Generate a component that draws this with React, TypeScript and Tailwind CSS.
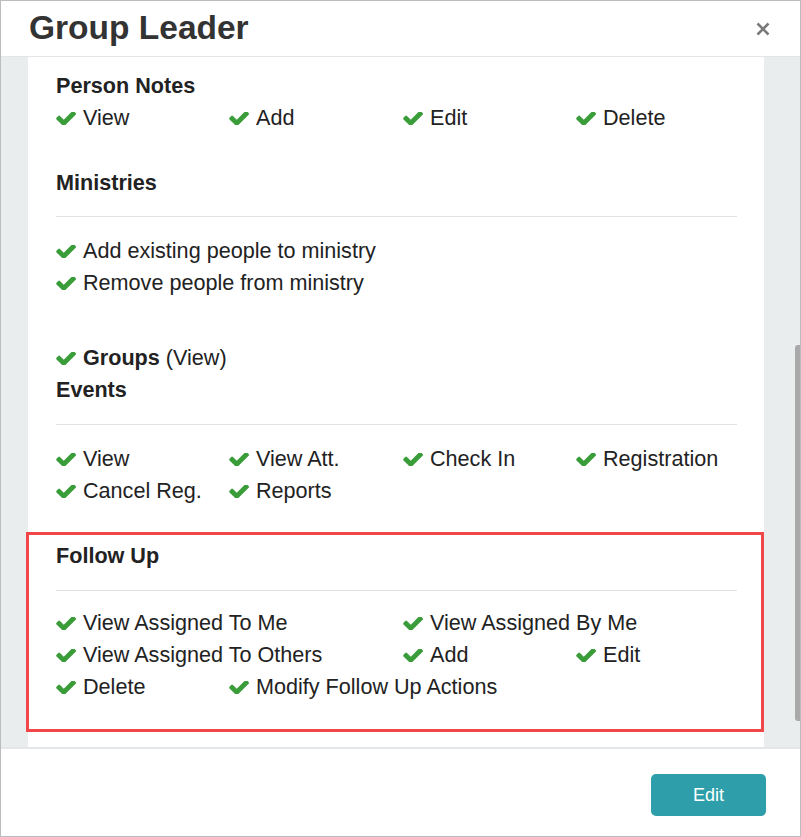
const font = { fontFamily: '"Liberation Sans", Arial, Helvetica, sans-serif' };

function Check() {
  return (
    <svg viewBox="109 430 1562 992" width="20" height="13" className="shrink-0 text-[#3a9d3a]" aria-hidden>
      <path
        fill="currentColor"
        d="M1671 566q0 40-28 68l-724 724-136 136q-28 28-68 28t-68-28l-136-136-362-362q-28-28-28-68t28-68l136-136q28-28 68-28t68 28l294 295 656-657q28-28 68-28t68 28l136 136q28 28 28 68z"
      />
    </svg>
  );
}

function Perm({ children, span }: { children: React.ReactNode; span?: boolean }) {
  return (
    <div className={`flex items-center gap-[7px] h-8 whitespace-nowrap ${span ? "col-span-2" : ""}`}>
      <Check />
      <span>{children}</span>
    </div>
  );
}

function Grid({ children }: { children: React.ReactNode }) {
  return <div className="grid grid-cols-[173px_174px_173px_1fr] w-[681px]">{children}</div>;
}

function Heading({ children }: { children: React.ReactNode }) {
  return <div className="h-8 leading-8 font-bold">{children}</div>;
}

function Rule() {
  return <div className="w-[681px] h-px bg-[#e2e2e2]" />;
}

export default function App() {
  return (
    <div
      style={font}
      className="w-[801px] h-[837px] border border-[#bcbcbc] bg-white flex flex-col text-[#222] text-[21.6px]"
    >
      {/* Title bar */}
      <div className="h-[56px] shrink-0 border-b border-[#e5e5e5] flex items-center justify-between pl-[28px] pr-[30px]">
        <h1 className="text-[33.5px] font-bold text-[#333] leading-none -mt-[2px]">Group Leader</h1>
        <svg width="14" height="14" viewBox="0 0 14 14" aria-hidden>
          <path d="M1.5 1.5 L12.5 12.5 M12.5 1.5 L1.5 12.5" stroke="#7a7a7a" strokeWidth="2.6" />
        </svg>
      </div>

      {/* Scrolling body */}
      <div className="h-[692px] shrink-0 bg-[#e9eded] flex border-b-2 border-[#e3e7e9]">
        <div className="ml-[27px] w-[736px] bg-white pl-[28px] pt-[13px]">
          <Heading>Person Notes</Heading>
          <Grid>
            <Perm>View</Perm>
            <Perm>Add</Perm>
            <Perm>Edit</Perm>
            <Perm>Delete</Perm>
          </Grid>

          <div className="mt-[33px]">
            <Heading>Ministries</Heading>
          </div>
          <div className="mt-[17px]">
            <Rule />
          </div>
          <div className="mt-[18px]">
            <Perm>Add existing people to ministry</Perm>
            <Perm>Remove people from ministry</Perm>
          </div>

          <div className="mt-[43px]">
            <Perm>
              <b>Groups</b> (View)
            </Perm>
          </div>
          <Heading>Events</Heading>
          <div className="mt-[18px]">
            <Rule />
          </div>
          <div className="mt-[18px]">
            <Grid>
              <Perm>View</Perm>
              <Perm>View Att.</Perm>
              <Perm>Check In</Perm>
              <Perm>Registration</Perm>
              <Perm>Cancel Reg.</Perm>
              <Perm>Reports</Perm>
            </Grid>
          </div>

          <div className="mt-[25px] -ml-[30px] w-[738px] h-[200px] border-[3px] border-[#f2474a] pl-[27px] pt-[5px]">
            <Heading>Follow Up</Heading>
            <div className="mt-[18px]">
              <Rule />
            </div>
            <div className="mt-[16px]">
              <Grid>
                <Perm span>View Assigned To Me</Perm>
                <Perm span>View Assigned By Me</Perm>
                <Perm span>View Assigned To Others</Perm>
                <Perm>Add</Perm>
                <Perm>Edit</Perm>
                <Perm>Delete</Perm>
                <Perm span>Modify Follow Up Actions</Perm>
              </Grid>
            </div>
          </div>
        </div>

        {/* Scrollbar gutter */}
        <div className="flex-1 flex justify-end pt-[288px]">
          <div className="w-[5px] h-[376px] bg-[#a9a9a9] rounded-l-[3px]" />
        </div>
      </div>

      {/* Footer */}
      <div className="flex-1 flex justify-end items-start pt-[25px] pr-[34px]">
        <button className="w-[115px] h-[42px] rounded-[5px] bg-[#2e9faa] text-white text-[18px]">Edit</button>
      </div>
    </div>
  );
}
